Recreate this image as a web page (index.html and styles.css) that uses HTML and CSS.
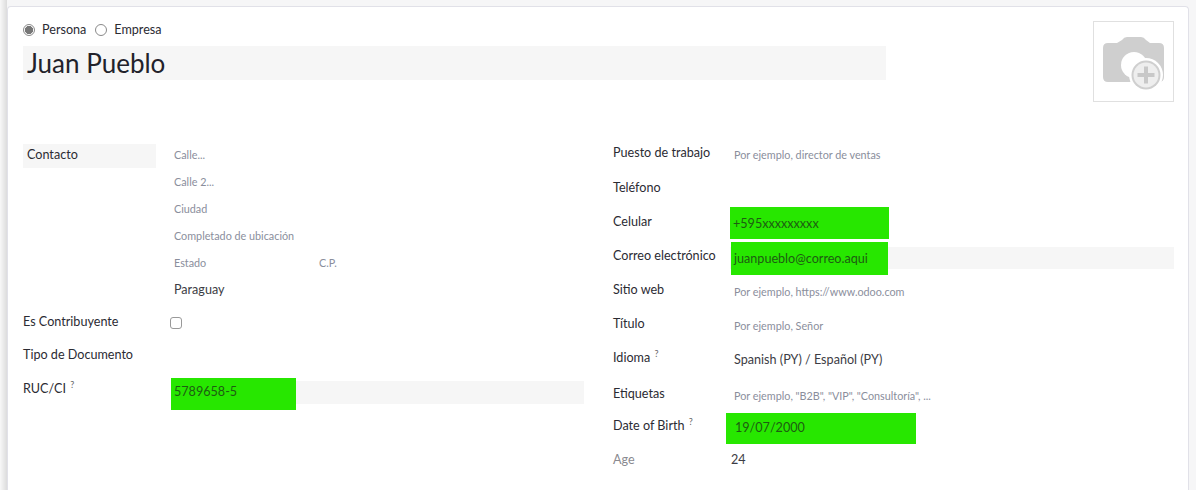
FILE: index.html
```html
<!DOCTYPE html>
<html lang="es">
<head>
<meta charset="utf-8">
<title>Juan Pueblo</title>
<link rel="stylesheet" href="styles.css">
</head>
<body>
<main class="sheet">
  <header class="head">
    <div class="head-main">
      <div class="radios">
        <span class="radio radio-on"></span><span class="radio-label">Persona</span>
        <span class="radio"></span><span class="radio-label">Empresa</span>
      </div>
      <div class="name">Juan Pueblo</div>
    </div>
    <div class="avatar">
      <svg width="62" height="56" viewBox="0 0 62 56" aria-hidden="true">
        <path fill="#cfcfcf" d="M24 1h14q3 0 5 3l4 3h9q5 0 5 5v29q0 5-5 5H5q-5 0-5-5V12q0-5 5-5h9l5-3q2-3 5-3z"/>
        <circle cx="31" cy="29" r="13" fill="#fff"/>
        <circle cx="43" cy="39" r="17" fill="#fff"/>
        <circle cx="43" cy="39" r="14.500" fill="#cfcfcf"/>
        <circle cx="43" cy="39" r="12.500" fill="#eeeeee"/>
        <path fill="#c8c8c8" d="M41 30.500h4V37h6.500v4H45v6.500h-4V41h-6.500v-4H41z"/>
      </svg>
    </div>
  </header>
  <div class="columns">
    <section class="col col-left">
      <div class="row row-addr1"><span class="label-box">Contacto</span><span class="ph ph-first">Calle...</span></div>
      <div class="row row-addr"><span class="ph">Calle 2...</span></div>
      <div class="row row-addr"><span class="ph">Ciudad</span></div>
      <div class="row row-addr"><span class="ph">Completado de ubicación</span></div>
      <div class="row row-addr"><span class="ph ph-state">Estado</span><span class="ph">C.P.</span></div>
      <div class="row row-addr row-country"><span class="val">Paraguay</span></div>
      <div class="row row-check"><span class="label label-check">Es Contribuyente</span><span class="check"></span></div>
      <div class="row row-doc"><span class="label">Tipo de Documento</span></div>
      <div class="row row-ruc"><span class="label">RUC/CI <sup>?</sup></span><span class="field field-ruc"><i class="mark mark-ruc"></i><span class="val val-marked">5789658-5</span></span></div>
    </section>
    <section class="col col-right">
      <div class="row r-job"><span class="label">Puesto de trabajo</span><span class="ph ph-job">Por ejemplo, director de ventas</span></div>
      <div class="row r-std"><span class="label">Teléfono</span></div>
      <div class="row r-std"><span class="label">Celular</span><span class="field field-cel"><i class="mark mark-cel"></i><span class="val val-marked">+595xxxxxxxxx</span></span></div>
      <div class="row r-std"><span class="label">Correo electrónico</span><span class="field field-mail"><i class="mark mark-mail"></i><span class="val val-marked">juanpueblo@correo.aqui</span></span></div>
      <div class="row r-std"><span class="label">Sitio web</span><span class="ph ph-low">Por ejemplo, https://www.odoo.com</span></div>
      <div class="row r-std"><span class="label">Título</span><span class="ph ph-low">Por ejemplo, Señor</span></div>
      <div class="row r-std"><span class="label">Idioma <sup>?</sup></span><span class="val val-low">Spanish (PY) / Español (PY)</span></div>
      <div class="row r-tag"><span class="label">Etiquetas</span><span class="ph ph-low">Por ejemplo, "B2B", "VIP", "Consultoría", ...</span></div>
      <div class="row r-dob"><span class="label">Date of Birth <sup>?</sup></span><span class="field field-dob"><i class="mark mark-dob"></i><span class="val val-marked">19/07/2000</span></span></div>
      <div class="row r-age"><span class="label label-muted">Age</span><span class="val val-age">24</span></div>
    </section>
  </div>
</main>
</body>
</html>
```
FILE: styles.css
```css
* { box-sizing: border-box; }
html, body { margin: 0; height: 490px; overflow: hidden; }
body {
  background: linear-gradient(to right, #f8f8f8, #dcdcdc) left top / 7px 100% no-repeat, #f6f6f7;
  font-family: Lato, "Open Sans", sans-serif;
  font-size: 12.6px;
  color: #2b2b33;
  padding: 6px 7px 0;
}
.sheet {
  background: #fff;
  border: 1px solid #e1e1e8;
  border-bottom: 0;
  border-radius: 4px 4px 0 0;
  height: 484px;
  padding: 14px 14px 0 15px;
}
.head { display: flex; justify-content: space-between; height: 123px; }
.head-main { width: 863px; }
.radios { display: flex; align-items: center; height: 19px; margin-top: -1px; }
.radio {
  width: 12px; height: 12px; border-radius: 50%;
  border: 1px solid #8a8a8a; background: #fff;
  flex: none; margin-right: 7px;
}
.radio-on { background: radial-gradient(circle, #777 0 3.8px, #fff 4.4px); }
.radio-label { margin-right: 9px; }
.name {
  margin-top: 7px; height: 34px; line-height: 34px;
  background: #f6f6f6; padding-left: 4px;
  font-size: 26px; color: #22222a;
}
.avatar {
  width: 81px; height: 81px;
  border: 1px solid #e0e0e0;
  display: flex; align-items: flex-start;
  padding: 14px 0 0 9px;
}
.avatar svg { display: block; }
.columns { display: flex; }
.col-left { width: 590px; flex: none; }
.col-right { flex: 1; }
.row { display: flex; align-items: center; }
.label { flex: none; }
.col-left .label { width: 148px; }
.col-left .label-check { width: 147px; }
.col-right .label { width: 121px; }
.label-muted { color: #8a8a90; }
sup { font-size: 9px; color: #666; vertical-align: 5px; line-height: 0; margin-left: 1px; }
.ph { font-size: 10.8px; color: #8a8e9c; }
.val { color: #3c3c44; }
.label-box {
  width: 133px; height: 24px; line-height: 21px;
  background: #f6f6f6; padding-left: 4px; margin-right: 18px; flex: none;
}
.row-addr1 { height: 24px; }
.ph-first { margin-bottom: 4px; }
.row-addr { height: 27px; padding-left: 151px; }
.row-country { height: 26px; }
.ph-state { width: 145px; }
.row-check { height: 38px; }
.check {
  width: 12px; height: 12px; border: 1px solid #999; border-radius: 3px;
  margin-top: 3px;
}
.row-doc { height: 28px; }
.row-ruc { height: 40px; }
.field { position: relative; display: flex; align-items: center; }
.field > .val { position: relative; }
.field-ruc {
  width: 413px; height: 23px; margin-top: 8px; padding: 0 0 2px 3px;
  background: #f6f6f6;
}
.field-cel { height: 16px; margin: 4px 0 0 -1px; }
.field-mail { background: #f6f6f6; width: 444px; height: 22px; padding-left: 4px; margin: 6px 0 0 -4px; }
.field-dob { height: 16px; margin: 4px 0 0 1px; }
.mark { position: absolute; background: #27e700; display: block; }
.mark-ruc { left: 0; top: -3px; width: 125px; height: 32px; }
.mark-cel { left: -3px; top: -8px; width: 159px; height: 32px; }
.mark-mail { left: 1px; top: -5px; width: 157px; height: 33px; }
.mark-dob { left: -9px; top: -6px; width: 190px; height: 31px; }
.val-marked { color: #1e5c12; }
.r-job { height: 29px; margin-top: -3px; padding-top: 4px; align-items: flex-start; }
.ph-job { margin-top: 3px; }
.ph-low { margin-top: 5px; }
.val-low { margin-top: 4px; }
.val-age { margin-left: -3px; }
.r-std { height: 34px; }
.r-tag { height: 38px; }
.r-dob { height: 26px; }
.r-age { height: 42px; }
```
